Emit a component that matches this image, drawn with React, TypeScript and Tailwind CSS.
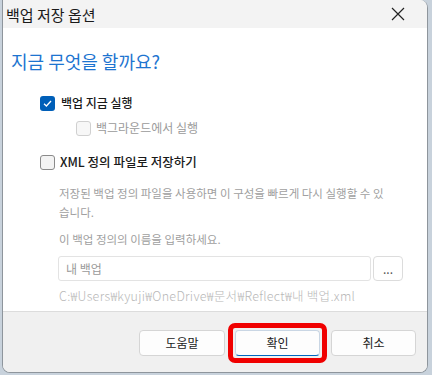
import React from "react";

const F = { fontFamily: '"Noto Sans CJK KR", "Noto Sans", sans-serif' };

function Check({ checked, disabled }: { checked?: boolean; disabled?: boolean }) {
  if (checked)
    return (
      <div className="w-[15px] h-[15px] rounded-[3px] bg-[#005fb8] flex items-center justify-center">
        <svg width="11" height="11" viewBox="0 0 11 11">
          <path d="M2 5.8 L4.4 8 L9 3" stroke="white" strokeWidth="1.3" fill="none" />
        </svg>
      </div>
    );
  return (
    <div
      className={
        "w-[15px] h-[15px] rounded-[3px] border " +
        (disabled ? "border-[#d0d0d0] bg-[#f7f7f7]" : "border-[#8a8a8a] bg-[#f3f3f3]")
      }
    />
  );
}

export default function App() {
  return (
    <div className="w-[432px] h-[375px] bg-[#c8d2dc] flex pl-[2px]" style={F}>
      <div className="w-[426px] h-[373px] bg-white border-r border-b border-l border-[#8e959c] rounded-tr-[8px] rounded-b-[8px] flex flex-col overflow-hidden">
        <div className="h-[28px] bg-[#f3f3f3] flex items-center justify-between pl-[3px] pr-[22px]">
          <span className="text-[15px] text-[#1a1a1a] leading-none">백업 저장 옵션</span>
          <svg width="14" height="14" viewBox="0 0 14 14">
            <path d="M1 1 L13 13 M13 1 L1 13" stroke="#222" strokeWidth="1.2" />
          </svg>
        </div>
        <div className="flex-1 bg-white flex flex-col pl-[8px]">
          <div className="mt-[21px] text-[18px] leading-[24px] text-[#1d74d0]">지금 무엇을 할까요?</div>
          <div className="mt-[22px] ml-[29px] flex items-center gap-[6px]">
            <Check checked />
            <span className="text-[12px] font-medium text-[#1a1a1a] leading-[16px]">백업 지금 실행</span>
          </div>
          <div className="mt-[9px] ml-[65px] flex items-center gap-[5px]">
            <Check disabled />
            <span className="text-[12px] text-[#9a9a9a] leading-[16px]">백그라운드에서 실행</span>
          </div>
          <div className="mt-[18px] ml-[29px] flex items-center gap-[5px]">
            <Check />
            <span className="text-[12.5px] font-medium text-[#1a1a1a] leading-[16px]">XML 정의 파일로 저장하기</span>
          </div>
          <div className="ml-[48px] mt-[14px] w-[325px] text-[11.5px] leading-[19px] text-[#a0a0a0]">
            저장된 백업 정의 파일을 사용하면 이 구성을 빠르게 다시 실행할 수 있습니다.
          </div>
          <div className="ml-[48px] mt-[8px] text-[11.5px] leading-[19px] text-[#a0a0a0]">
            이 백업 정의의 이름을 입력하세요.
          </div>
          <div className="ml-[47px] mt-[7px] flex gap-[2px]">
            <div className="w-[313px] h-[25px] border border-[#e3e3e3] rounded-[3px] flex items-center pl-[7px] text-[12px] text-[#9a9a9a]">
              내 백업
            </div>
            <div className="w-[30px] h-[25px] border border-[#dcdcdc] rounded-[4px] flex items-center justify-center text-[12px] text-[#555] leading-none">
              ...
            </div>
          </div>
          <div className="ml-[48px] mt-[7px] text-[12.5px] tracking-[0.3px] leading-[16px] text-[#b8b8b8] font-light">
            C:₩Users₩kyuji₩OneDrive₩문서₩Reflect₩내 백업.xml
          </div>
        </div>
        <div className="h-[61px] bg-[#f0f0f0] border-t border-[#dcdcdc] flex items-center justify-end pr-[11px] pt-[1px]">
          <button className="w-[86px] h-[26px] bg-[#fdfdfd] border border-[#d5d5d5] rounded-[4px] text-[12px] text-[#1a1a1a]">도움말</button>
          <div className="ml-[3px] p-[2px] border-[5px] border-[#f00000] rounded-[7px] flex">
            <button className="w-[85px] h-[26px] bg-[#fdfdfd] border border-[#c9d6e4] border-b-[#0067c0] rounded-[4px] text-[12px] text-[#1a1a1a]">확인</button>
          </div>
          <button className="ml-[4px] w-[85px] h-[26px] bg-[#fdfdfd] border border-[#d5d5d5] rounded-[4px] text-[12px] text-[#1a1a1a]">취소</button>
        </div>
      </div>
    </div>
  );
}
